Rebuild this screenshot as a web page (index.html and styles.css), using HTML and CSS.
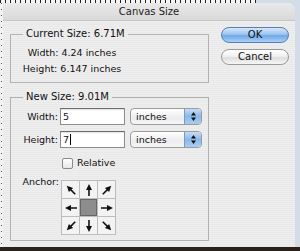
FILE: index.html
```html
<!DOCTYPE html>
<html>
<head>
<meta charset="utf-8">
<link rel="stylesheet" href="styles.css">
</head>
<body>
<div class="screen">
  <div class="ruler"></div>
  <div class="main">
    <div class="vruler"></div>
    <div class="window">
      <div class="titlebar">Canvas Size</div>
      <div class="content">
        <div class="left">
          <fieldset class="group group-current">
            <legend>Current Size: 6.71M</legend>
            <div class="info">
              <div class="info-row">Width: 4.24 inches</div>
              <div class="info-row">Height: 6.147 inches</div>
            </div>
          </fieldset>
          <fieldset class="group group-new">
            <legend>New Size: 9.01M</legend>
            <div class="form">
              <label class="lbl">Width:</label>
              <div class="fields">
                <div class="input">5</div>
                <div class="select"><span class="sel-text">inches</span><span class="stepper"><svg width="7" height="11" viewBox="0 0 7 11"><path d="M3.5 1 L6 4.5 L1 4.5 Z M3.5 10 L6 6.5 L1 6.5 Z" fill="#111"/></svg></span></div>
              </div>
              <label class="lbl">Height:</label>
              <div class="fields">
                <div class="input">7<span class="caret"></span></div>
                <div class="select"><span class="sel-text">inches</span><span class="stepper"><svg width="7" height="11" viewBox="0 0 7 11"><path d="M3.5 1 L6 4.5 L1 4.5 Z M3.5 10 L6 6.5 L1 6.5 Z" fill="#111"/></svg></span></div>
              </div>
              <span></span>
              <div class="check-row"><span class="checkbox"></span>Relative</div>
              <label class="lbl lbl-anchor">Anchor:</label>
              <div class="anchor">
                <div class="cell"><svg class="arr r-315" width="16" height="16" viewBox="0 0 16 16"><path d="M8 14 L8 6" stroke="#111" stroke-width="1.6"/><path d="M8 2 L5 8 L11 8 Z" fill="#111"/></svg></div>
                <div class="cell"><svg class="arr" width="16" height="16" viewBox="0 0 16 16"><path d="M8 14 L8 6" stroke="#111" stroke-width="1.6"/><path d="M8 2 L5 8 L11 8 Z" fill="#111"/></svg></div>
                <div class="cell"><svg class="arr r-45" width="16" height="16" viewBox="0 0 16 16"><path d="M8 14 L8 6" stroke="#111" stroke-width="1.6"/><path d="M8 2 L5 8 L11 8 Z" fill="#111"/></svg></div>
                <div class="cell"><svg class="arr r-270" width="16" height="16" viewBox="0 0 16 16"><path d="M8 14 L8 6" stroke="#111" stroke-width="1.6"/><path d="M8 2 L5 8 L11 8 Z" fill="#111"/></svg></div>
                <div class="cell cell-center"></div>
                <div class="cell"><svg class="arr r-90" width="16" height="16" viewBox="0 0 16 16"><path d="M8 14 L8 6" stroke="#111" stroke-width="1.6"/><path d="M8 2 L5 8 L11 8 Z" fill="#111"/></svg></div>
                <div class="cell"><svg class="arr r-225" width="16" height="16" viewBox="0 0 16 16"><path d="M8 14 L8 6" stroke="#111" stroke-width="1.6"/><path d="M8 2 L5 8 L11 8 Z" fill="#111"/></svg></div>
                <div class="cell"><svg class="arr r-180" width="16" height="16" viewBox="0 0 16 16"><path d="M8 14 L8 6" stroke="#111" stroke-width="1.6"/><path d="M8 2 L5 8 L11 8 Z" fill="#111"/></svg></div>
                <div class="cell"><svg class="arr r-135" width="16" height="16" viewBox="0 0 16 16"><path d="M8 14 L8 6" stroke="#111" stroke-width="1.6"/><path d="M8 2 L5 8 L11 8 Z" fill="#111"/></svg></div>
              </div>
            </div>
          </fieldset>
        </div>
        <div class="buttons">
          <div class="btn btn-ok">OK</div>
          <div class="btn btn-cancel">Cancel</div>
        </div>
      </div>
    </div>
  </div>
  <div class="bottom"></div>
</div>
</body>
</html>
```
FILE: styles.css
```css
html, body {
  margin: 0;
  padding: 0;
}
body {
  font-family: "DejaVu Sans", "Liberation Sans", sans-serif;
  font-size: 9.5px;
  color: #111;
}
.screen {
  width: 300px;
  height: 251px;
  overflow: hidden;
  display: flex;
  flex-direction: column;
  background: #d3dde7;
}
.ruler {
  height: 3px;
  width: 256px;
  flex: none;
  background: repeating-linear-gradient(90deg, #222 0 1px, #f4f4f4 1px 5px);
}
.main {
  flex: 1;
  display: flex;
  min-height: 0;
}
.vruler {
  width: 3px;
  flex: none;
  background: #f2f2f2;
  border-right: 0;
  background-image: repeating-linear-gradient(180deg, #555 0 1px, transparent 1px 6px);
  background-size: 1px 100%;
  background-repeat: no-repeat;
  background-position: 1px 0;
}
.window {
  width: 292px;
  flex: none;
  display: flex;
  flex-direction: column;
  border-top-right-radius: 7px;
  background: repeating-linear-gradient(180deg, #eeeeee 0 1px, #e9e9e9 1px 2px);
  overflow: hidden;
}
.titlebar {
  height: 17px;
  line-height: 17px;
  border-bottom: 1px solid #c4c4c4;
  background: linear-gradient(180deg, #e9e9e9, #d9d9d9);
  text-align: center;
  font-size: 10px;
  color: #222;
}
.content {
  display: flex;
  gap: 12px;
  padding: 7px 0 0 7px;
}
.left {
  width: 199px;
  display: flex;
  flex-direction: column;
  gap: 8px;
}
.group {
  margin: 0;
  padding: 0;
  border: 1px solid #b2b2b2;
  min-width: 0;
}
.group legend {
  font-size: 10px;
  line-height: 12px;
  padding: 0 3px;
  margin-left: 12px;
}
.info {
  width: 122px;
  text-align: center;
  padding: 5px 0 5px 0;
}
.info-row {
  line-height: 16px;
  white-space: nowrap;
}
.form {
  display: grid;
  grid-template-columns: 47px auto;
  column-gap: 2px;
  row-gap: 6px;
  align-items: center;
  padding: 5px 0 5px 0;
}
.lbl {
  text-align: right;
  white-space: nowrap;
}
.lbl-anchor {
  align-self: start;
  margin-top: 1px;
  margin-right: -1px;
}
.fields {
  display: flex;
  align-items: center;
  gap: 5px;
}
.input {
  width: 61px;
  height: 15px;
  line-height: 15px;
  padding-left: 2px;
  background: #fff;
  border: 1px solid #8c8c8c;
  border-top-color: #6e6e6e;
  box-shadow: inset 0 1px 1px rgba(0,0,0,0.12);
  display: flex;
  align-items: center;
}
.caret {
  display: inline-block;
  width: 1px;
  height: 11px;
  background: #000;
  margin-left: 1px;
}
.select {
  width: 70px;
  height: 15px;
  border: 1px solid #9c9c9c;
  border-radius: 4px;
  background: linear-gradient(180deg, #ffffff, #ececec 60%, #f6f6f6);
  display: flex;
  align-items: center;
  overflow: hidden;
}
.sel-text {
  flex: 1;
  padding-left: 5px;
}
.stepper {
  width: 16px;
  height: 15px;
  display: flex;
  align-items: center;
  justify-content: center;
  background: linear-gradient(180deg, #c6dcf4, #8ab8ea 50%, #a9cdf3);
  border-left: 1px solid #7a9cc4;
}
.check-row {
  display: flex;
  align-items: center;
  gap: 4px;
  margin-top: 3px;
  margin-left: 2px;
  line-height: 12px;
}
.checkbox {
  width: 9px;
  height: 9px;
  border: 1px solid #8a8a8a;
  border-radius: 2px;
  background: linear-gradient(180deg, #ffffff, #e6e6e6);
}
.anchor {
  margin-top: 5px;
  margin-left: 1px;
  display: grid;
  grid-template-columns: repeat(3, 17px);
  grid-template-rows: repeat(3, 17px);
  gap: 1px;
  width: 53px;
  background: #bcbcbc;
  border: 1px solid #bcbcbc;
}
.cell {
  background: #f3f3f3;
  display: flex;
  align-items: center;
  justify-content: center;
}
.cell-center {
  background: #8d8d8d;
  box-shadow: inset 0 0 0 1px #666;
}
.arr.r-45 { transform: rotate(45deg); }
.arr.r-90 { transform: rotate(90deg); }
.arr.r-135 { transform: rotate(135deg); }
.arr.r-180 { transform: rotate(180deg); }
.arr.r-225 { transform: rotate(225deg); }
.arr.r-270 { transform: rotate(270deg); }
.arr.r-315 { transform: rotate(315deg); }
.buttons {
  display: flex;
  flex-direction: column;
  gap: 6px;
  margin-top: -1px;
}
.btn {
  width: 66px;
  height: 14px;
  line-height: 14px;
  text-align: center;
  border-radius: 8px;
  font-size: 10px;
  color: #111;
}
.btn-ok {
  border: 1px solid #5b7fae;
  background: linear-gradient(180deg, #d5e6f9 0%, #9cc6f0 45%, #6fa8e6 55%, #a8d2fb 100%);
}
.btn-cancel {
  border: 1px solid #9a9a9a;
  background: linear-gradient(180deg, #ffffff 0%, #f0f0f0 45%, #dedede 55%, #f6f6f6 100%);
}
.bottom {
  height: 4px;
  flex: none;
  background: #2a2219;
}
```
